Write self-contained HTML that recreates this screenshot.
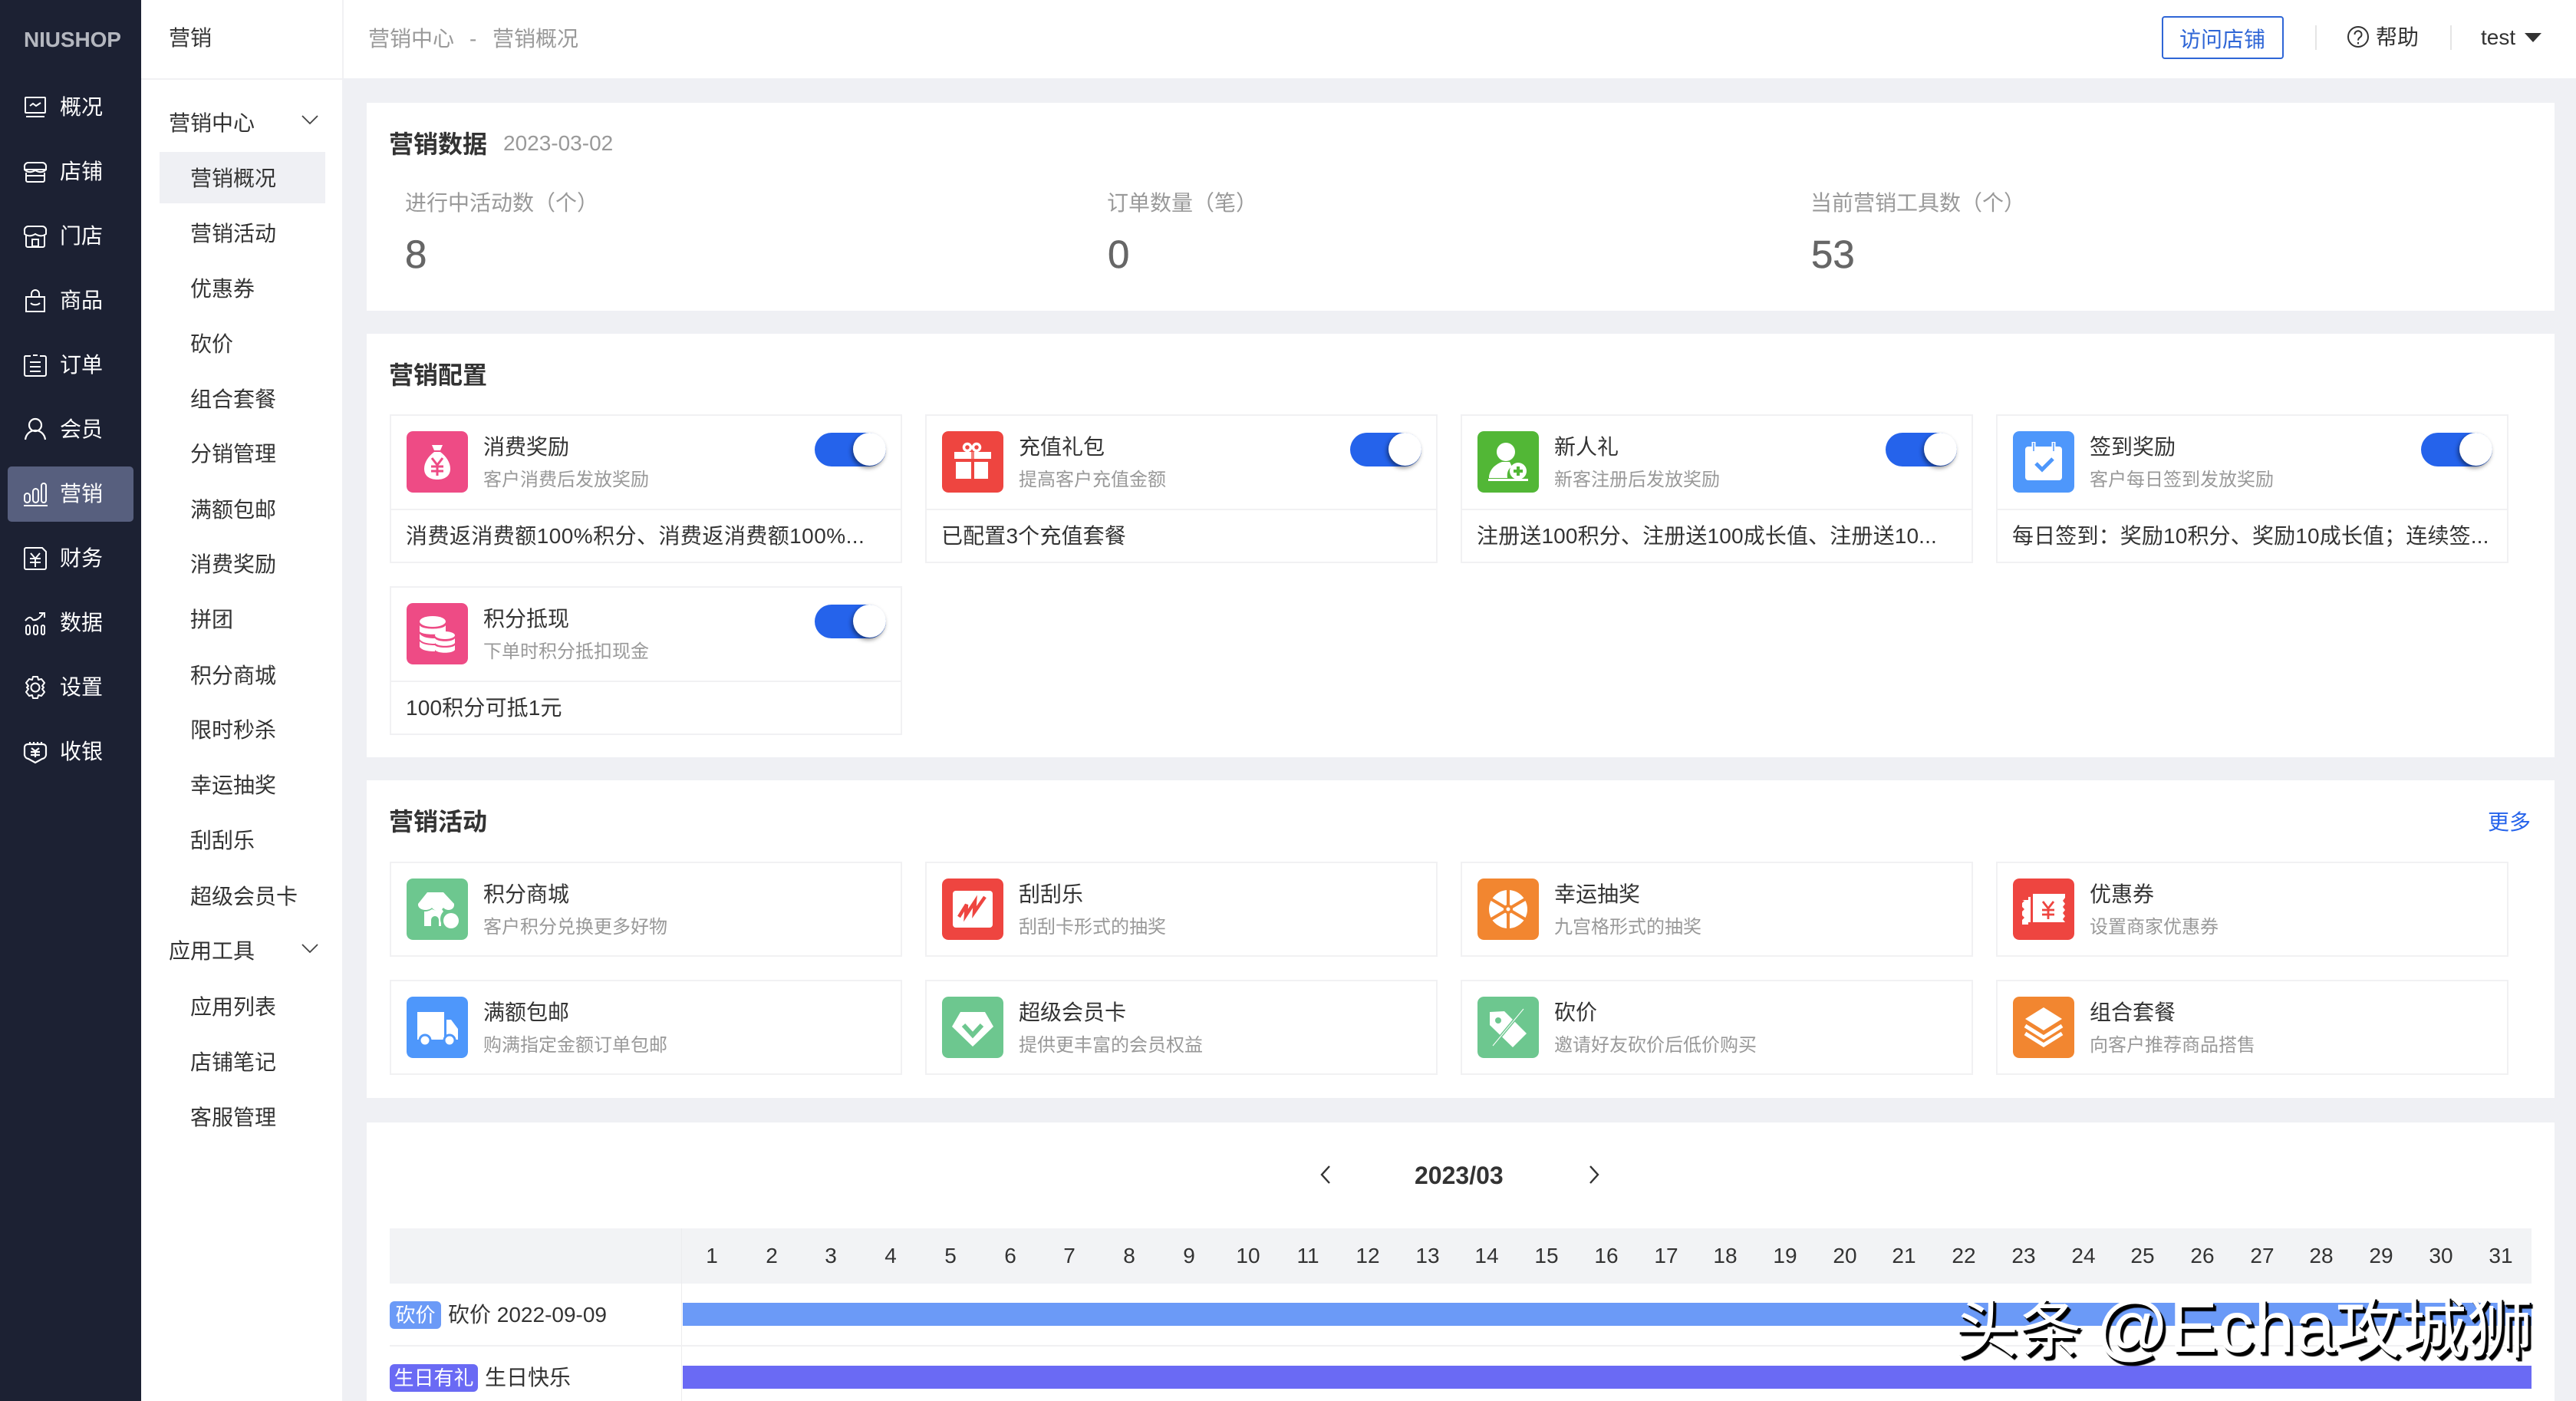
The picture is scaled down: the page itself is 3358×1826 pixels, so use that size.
<!DOCTYPE html>
<html lang="zh">
<head>
<meta charset="utf-8">
<title>营销概况</title>
<style>
html,body{margin:0;padding:0}
body{width:3358px;height:1826px;position:relative;overflow:hidden;background:#eff0f4;font-family:"Liberation Sans","Noto Sans CJK SC",sans-serif;color:#333;font-size:28px}
div,svg{position:absolute;display:block}
.t{white-space:nowrap;line-height:40px;height:40px}
.side{background:#1c2133;left:0;top:0;width:184px;height:1826px}
.m{left:78px;color:#fff;width:60px}
.n{left:248px;margin-top:2px}
.p{left:220px;margin-top:1px}
.card{background:#fff;left:478px;width:2852px}
.h{font-weight:700;font-size:32px;left:507px;color:#333;margin-top:1px}
.box{border:2px solid #f1f1f3;box-sizing:border-box;width:668px;background:#fff}
.ic{width:80px;height:80px;left:20px;top:20px;border-radius:8px}
.a{left:120px;top:21px;color:#333}
.b{left:120px;top:64px;color:#999;font-size:24px}
.f{left:19px;top:137px;color:#333;width:640px;letter-spacing:.15px}
.sep{left:0;right:0;top:121px;height:2px;background:#f1f1f3}
.sw{left:552px;top:22px;width:93px;height:44px;border-radius:22px;background:#2563eb}
.kn{right:0;top:0;width:43px;height:43px;border-radius:50%;background:#fff;box-shadow:-2px 3px 6px rgba(0,0,0,.45)}
.d{top:1617px;width:60px;text-align:center;color:#333;margin-left:1px}
.lb{color:#999;margin-top:2px}
.big{color:#666;font-size:51px;-webkit-text-stroke:.5px #666}
</style>
</head>
<body>
<div class="side"></div>
<div class="t" style="left:31px;top:32px;color:#b4b7bf;font-weight:700;font-size:28px;letter-spacing:-.1px">NIUSHOP</div>
<div style="left:10px;top:608px;width:164px;height:72px;background:#575f7e;border-radius:5px"></div>

<svg style="left:30px;top:124px" width="32" height="32" viewBox="0 0 32 32" fill="none" stroke="#fff" stroke-width="2"><rect x="3" y="3" width="26" height="20" rx="1"/><path d="M9 14l4-3 4 3 6-4M4 28h24"/></svg>
<svg style="left:30px;top:208px" width="32" height="32" viewBox="0 0 32 32" fill="none" stroke="#fff" stroke-width="2"><path d="M7 4h18a5 5 0 0 1 5 6v3H2v-3a5 5 0 0 1 5-6zM2 13c4 4 9 4 14 1 5 3 10 3 14-1M4 17v10a2 2 0 0 0 2 2h20a2 2 0 0 0 2-2V17M4 21h24"/></svg>
<svg style="left:30px;top:292px" width="32" height="32" viewBox="0 0 32 32" fill="none" stroke="#fff" stroke-width="2"><path d="M7 3h18a5 5 0 0 1 5 6v4c-4 3-9 3-14 0-5 3-10 3-14 0V9a5 5 0 0 1 5-6zM4 15v13a2 2 0 0 0 2 2h20a2 2 0 0 0 2-2V15"/><rect x="12" y="20" width="8" height="9"/></svg>
<svg style="left:30px;top:376px" width="32" height="32" viewBox="0 0 32 32" fill="none" stroke="#fff" stroke-width="2"><path d="M4 11h24v19H4zM11 11V7a5 5 0 0 1 5-5 5 5 0 0 1 5 5v4M10 19c3 3 9 3 12 0"/></svg>
<svg style="left:30px;top:460px" width="32" height="32" viewBox="0 0 32 32" fill="none" stroke="#fff" stroke-width="2"><path d="M10 4H3a2 2 0 0 0-1 2v22a2 2 0 0 0 2 2h24a2 2 0 0 0 2-2V6a2 2 0 0 0-2-2h-6M13 3h6M9 12h14M9 18h14M9 24h14"/></svg>
<svg style="left:30px;top:543px" width="32" height="32" viewBox="0 0 32 32" fill="none" stroke="#fff" stroke-width="2.2"><circle cx="16" cy="11" r="8"/><path d="M3 30c1-8 7-12 13-12s12 4 13 12"/></svg>
<svg style="left:30px;top:628px" width="32" height="32" viewBox="0 0 32 32" fill="none" stroke="#fff" stroke-width="2"><rect x="2" y="15" width="7" height="12" rx="3.5"/><rect x="13" y="9" width="7" height="18" rx="3.5"/><rect x="24" y="2" width="6" height="25" rx="3"/><path d="M1 31h31"/></svg>
<svg style="left:30px;top:712px" width="32" height="32" viewBox="0 0 32 32" fill="none" stroke="#fff" stroke-width="2"><path d="M4 2h21l5 5v21a2 2 0 0 1-2 2H4a2 2 0 0 1-2-2V4a2 2 0 0 1 2-2zM10 9l6 7 6-7M9 16h14M9 21h14M16 16v11"/></svg>
<svg style="left:32px;top:796px" width="28" height="32" viewBox="0 0 28 32" fill="none" stroke="#fff" stroke-width="2"><rect x="2" y="19" width="5" height="12" rx="2.5"/><rect x="12" y="19" width="5" height="12" rx="2.5"/><rect x="22" y="19" width="4" height="12" rx="2"/><path d="M1 13c4-5 7-6 10-1 5 1 9-3 13-8M19 3h7v6"/></svg>
<svg style="left:30px;top:880px" width="32" height="32" viewBox="0 0 32 32" fill="none" stroke="#fff" stroke-width="2"><path d="M13 2h6l1 4 4-1 4 5-3 4 2 2-2 2 3 4-4 5-4-1-1 4h-6l-1-4-4 1-4-5 3-4-2-2 2-2-3-4 4-5 4 1z" stroke-linejoin="round"/><circle cx="16" cy="16" r="5.5"/></svg>
<svg style="left:30px;top:964px" width="32" height="32" viewBox="0 0 32 32" fill="none" stroke="#fff" stroke-width="2.2"><path d="M9 5v-2M14 5v-2M19 5v-2M24 5v-2M6 6h20a4 4 0 0 1 4 4v10a6 6 0 0 1-5 5l-9 5-9-5a6 6 0 0 1-5-5V10a4 4 0 0 1 4-4zM11 11l5 4 5-4M10 16h12M10 20h12M16 15v8"/></svg>

<div class="t m" style="top:120px">概况</div>
<div class="t m" style="top:204px">店铺</div>
<div class="t m" style="top:288px">门店</div>
<div class="t m" style="top:372px">商品</div>
<div class="t m" style="top:456px">订单</div>
<div class="t m" style="top:540px">会员</div>
<div class="t m" style="top:624px">营销</div>
<div class="t m" style="top:708px">财务</div>
<div class="t m" style="top:792px">数据</div>
<div class="t m" style="top:876px">设置</div>
<div class="t m" style="top:960px">收银</div>

<!-- second column -->
<div style="left:184px;top:0;width:262px;height:1826px;background:#fff"></div>
<div style="left:184px;top:102px;width:262px;height:2px;background:#f1f1f3"></div>
<div style="left:446px;top:0;width:2px;height:102px;background:#f1f1f3"></div>
<div class="t p" style="top:29px">营销</div>
<div class="t p" style="top:140px">营销中心</div>
<svg style="left:392px;top:149px" width="24" height="16" viewBox="0 0 24 16" fill="none" stroke="#444" stroke-width="1.8"><path d="M2 2l10 10L22 2"/></svg>
<div style="left:208px;top:198px;width:216px;height:67px;background:#eff0f4"></div>
<div class="t n" style="top:211px">营销概况</div>
<div class="t n" style="top:283px">营销活动</div>
<div class="t n" style="top:355px">优惠券</div>
<div class="t n" style="top:427px">砍价</div>
<div class="t n" style="top:499px">组合套餐</div>
<div class="t n" style="top:570px">分销管理</div>
<div class="t n" style="top:643px">满额包邮</div>
<div class="t n" style="top:714px">消费奖励</div>
<div class="t n" style="top:786px">拼团</div>
<div class="t n" style="top:859px">积分商城</div>
<div class="t n" style="top:930px">限时秒杀</div>
<div class="t n" style="top:1002px">幸运抽奖</div>
<div class="t n" style="top:1074px">刮刮乐</div>
<div class="t n" style="top:1147px">超级会员卡</div>
<div class="t p" style="top:1219px">应用工具</div>
<svg style="left:392px;top:1229px" width="24" height="16" viewBox="0 0 24 16" fill="none" stroke="#444" stroke-width="1.8"><path d="M2 2l10 10L22 2"/></svg>
<div class="t n" style="top:1291px">应用列表</div>
<div class="t n" style="top:1363px">店铺笔记</div>
<div class="t n" style="top:1435px">客服管理</div>

<!-- top bar -->
<div style="left:448px;top:0;width:2910px;height:102px;background:#fff"></div>
<div class="t lb" style="left:480px;top:29px">营销中心</div>
<div class="t lb" style="left:612px;top:29px">-</div>
<div class="t lb" style="left:642px;top:29px">营销概况</div>
<div style="left:2818px;top:21px;width:159px;height:56px;border:2px solid #2f66d6;border-radius:4px;box-sizing:border-box"></div>
<div class="t" style="left:2841px;top:32px;color:#2f66d6">访问店铺</div>
<div style="left:3018px;top:33px;width:2px;height:32px;background:#e5e5e5"></div>
<svg style="left:3059px;top:33px" width="30" height="30" viewBox="0 0 30 30" fill="none" stroke="#333" stroke-width="2"><circle cx="15" cy="15" r="13"/><path d="M10.5 12a4.5 4.5 0 1 1 7 3.6c-1.6 1.1-2.5 2-2.5 4"/><path d="M15 22v2.4"/></svg>
<div class="t" style="left:3097px;top:29px">帮助</div>
<div style="left:3194px;top:33px;width:2px;height:32px;background:#e5e5e5"></div>
<div class="t" style="left:3234px;top:29px">test</div>
<svg style="left:3291px;top:43px" width="22" height="12" viewBox="0 0 22 12"><path d="M0 0h22L11 12z" fill="#333"/></svg>

<!-- card 1 -->
<div class="card" style="top:134px;height:271px"></div>
<div class="t h" style="top:167px">营销数据</div>
<div class="t" style="left:656px;top:167px;color:#999;font-size:28px">2023-03-02</div>
<div class="t lb" style="left:528px;top:243px">进行中活动数（个）</div>
<div class="t lb" style="left:1443px;top:243px">订单数量（笔）</div>
<div class="t lb" style="left:2360px;top:243px">当前营销工具数（个）</div>
<div class="t big" style="left:528px;top:312px">8</div>
<div class="t big" style="left:1444px;top:312px">0</div>
<div class="t big" style="left:2361px;top:312px">53</div>

<!-- card 2 -->
<div class="card" style="top:435px;height:552px"></div>
<div class="t h" style="top:468px">营销配置</div>

<div class="box" style="left:508px;top:540px;height:194px">
<svg class="ic" viewBox="0 0 80 80"><rect width="80" height="80" rx="8" fill="#ee4b85"/><path d="M33 18h14l-3 7h-8zM36 27h8c8 6 13 14 13 22 0 10-8 14-17 14s-17-4-17-14c0-8 5-16 13-22z" fill="#fff"/><path d="M33 35l7 9 7-9M32 46h16M32 52h16M40 44v14" stroke="#ee4b85" stroke-width="3" fill="none"/></svg>
<div class="t a">消费奖励</div><div class="t b">客户消费后发放奖励</div>
<div class="sw"><div class="kn"></div></div>
<div class="sep"></div><div class="t f" style="letter-spacing:.45px">消费返消费额100%积分、消费返消费额100%...</div></div>

<div class="box" style="left:1206px;top:540px;height:194px">
<svg class="ic" viewBox="0 0 80 80"><rect width="80" height="80" rx="8" fill="#ee4540"/><path d="M16 27h22v9H16zM42 27h22v9H42zM18 40h20v22H18zM42 40h18v22H42z" fill="#fff"/><path d="M38 27h4v9h-4z" fill="#fff" opacity=".3"/><g fill="none" stroke="#fff" stroke-width="3.5"><circle cx="33" cy="21" r="4.5"/><circle cx="45" cy="21" r="4.5"/></g></svg>
<div class="t a">充值礼包</div><div class="t b">提高客户充值金额</div>
<div class="sw"><div class="kn"></div></div>
<div class="sep"></div><div class="t f">已配置3个充值套餐</div></div>

<div class="box" style="left:1904px;top:540px;height:194px">
<svg class="ic" viewBox="0 0 80 80"><rect width="80" height="80" rx="8" fill="#52b736"/><circle cx="37" cy="27" r="12" fill="#fff"/><path d="M32 40h10l3 6c-5 3-7 8-6 15h-24c0-9 6-17 17-21z" fill="#fff"/><circle cx="53" cy="52" r="11" fill="#fff"/><path d="M53 46v12M47 52h12" stroke="#52b736" stroke-width="4"/><path d="M14 62h52v3H14z" fill="#fff"/></svg>
<div class="t a">新人礼</div><div class="t b">新客注册后发放奖励</div>
<div class="sw"><div class="kn"></div></div>
<div class="sep"></div><div class="t f">注册送100积分、注册送100成长值、注册送10...</div></div>

<div class="box" style="left:2602px;top:540px;height:194px">
<svg class="ic" viewBox="0 0 80 80"><rect width="80" height="80" rx="8" fill="#4e97fb"/><rect x="16" y="20" width="48" height="44" rx="4" fill="#fff"/><path d="M27 14v12M53 14v12" stroke="#fff" stroke-width="5"/><path d="M27 15v11M53 15v11" stroke="#4e97fb" stroke-width="1.5"/><path d="M30 42l8 8 14-14" stroke="#4e97fb" stroke-width="5" fill="none"/></svg>
<div class="t a">签到奖励</div><div class="t b">客户每日签到发放奖励</div>
<div class="sw"><div class="kn"></div></div>
<div class="sep"></div><div class="t f">每日签到：奖励10积分、奖励10成长值；连续签...</div></div>

<div class="box" style="left:508px;top:764px;height:194px">
<svg class="ic" viewBox="0 0 80 80"><rect width="80" height="80" rx="8" fill="#ee4b85"/><g fill="#fff"><ellipse cx="34" cy="24" rx="17" ry="7"/><path d="M17 29c3 6 31 6 34 0v8c-3 5-31 5-34 0zM17 40c4 5 12 6 20 6v7c-8 0-17-1-20-6zM17 50c4 4 12 5 20 5v8c-8 0-17-1-20-6z"/><ellipse cx="50" cy="42" rx="13" ry="5"/><path d="M37 46c3 5 23 5 26 0v6c-3 5-23 5-26 0zM37 55c3 4 23 4 26 0v6c-3 5-23 5-26 0z"/></g></svg>
<div class="t a">积分抵现</div><div class="t b">下单时积分抵扣现金</div>
<div class="sw"><div class="kn"></div></div>
<div class="sep"></div><div class="t f">100积分可抵1元</div></div>

<!-- card 3 -->
<div class="card" style="top:1017px;height:414px"></div>
<div class="t h" style="top:1050px">营销活动</div>
<div class="t" style="left:3243px;top:1052px;color:#2563eb">更多</div>

<div class="box" style="left:508px;top:1123px;height:124px"><svg class="ic" viewBox="0 0 80 80"><rect width="80" height="80" rx="8" fill="#6dc78f"/><path d="M27 18h21l14 15c1 9-10 10-14 5-3 5-12 5-15 0-4 5-19 4-18-5z" fill="#fff"/><path d="M23 43c4 0 7-1 10-3 4 2 9 2 13 0l2 3c-4 4-5 10-3 15v4h-3V54a5 5 0 0 0-10 0v8h-9z" fill="#fff"/><circle cx="58" cy="55" r="10" fill="#fff"/></svg><div class="t a">积分商城</div><div class="t b">客户积分兑换更多好物</div></div>
<div class="box" style="left:1206px;top:1123px;height:124px"><svg class="ic" viewBox="0 0 80 80"><rect width="80" height="80" rx="8" fill="#ee4540"/><rect x="14" y="16" width="52" height="48" rx="4" fill="#fff"/><path d="M22 50l10-16-1 14 12-18-1 14 14-20" stroke="#ee4540" stroke-width="4.5" fill="none"/></svg><div class="t a">刮刮乐</div><div class="t b">刮刮卡形式的抽奖</div></div>
<div class="box" style="left:1904px;top:1123px;height:124px"><svg class="ic" viewBox="0 0 80 80"><rect width="80" height="80" rx="8" fill="#f28630"/><circle cx="40" cy="40" r="25" fill="#fff"/><g stroke="#f28630" stroke-width="4"><path d="M40 15v50M18 27l44 26M18 53l44-26"/></g><circle cx="40" cy="40" r="6" fill="#f28630"/><circle cx="40" cy="40" r="2.5" fill="#fff"/></svg><div class="t a">幸运抽奖</div><div class="t b">九宫格形式的抽奖</div></div>
<div class="box" style="left:2602px;top:1123px;height:124px"><svg class="ic" viewBox="0 0 80 80"><rect width="80" height="80" rx="8" fill="#ee4540"/><path d="M12 28h8v-4h3v33h-3v3h-8v-6l3-3-3-3v-5l3-3-3-3v-5l3-3zM26 20h42v5l-3 4 3 4-3 4 3 4-3 4 3 4-3 4 3 4h-42z" fill="#fff"/><path d="M39 30l7 9 7-9M38 41h16M38 47h16M46 39v14" stroke="#ee4540" stroke-width="2.8" fill="none"/></svg><div class="t a">优惠券</div><div class="t b">设置商家优惠券</div></div>

<div class="box" style="left:508px;top:1277px;height:124px"><svg class="ic" viewBox="0 0 80 80"><rect width="80" height="80" rx="8" fill="#4e97fb"/><path d="M14 20h35v36H14zM52 30h6l9 12v14H52z" fill="#fff"/><circle cx="24" cy="57" r="7" fill="#fff" stroke="#4e97fb" stroke-width="3"/><circle cx="56" cy="57" r="7" fill="#fff" stroke="#4e97fb" stroke-width="3"/></svg><div class="t a">满额包邮</div><div class="t b">购满指定金额订单包邮</div></div>
<div class="box" style="left:1206px;top:1277px;height:124px"><svg class="ic" viewBox="0 0 80 80"><rect width="80" height="80" rx="8" fill="#6dc78f"/><path d="M24 20h32l11 19-27 26-27-26z" fill="#fff"/><path d="M28 37l12 13 12-13" stroke="#6dc78f" stroke-width="6" fill="none"/></svg><div class="t a">超级会员卡</div><div class="t b">提供更丰富的会员权益</div></div>
<div class="box" style="left:1904px;top:1277px;height:124px"><svg class="ic" viewBox="0 0 80 80"><rect width="80" height="80" rx="8" fill="#6dc78f"/><path d="M16 20l19-1 29 29-18 18-30-29z" fill="#fff"/><circle cx="27" cy="31" r="4" fill="#6dc78f"/><path d="M20 64l40-48" stroke="#6dc78f" stroke-width="4"/><path d="M20 64l40-48" stroke="#fff" stroke-width="1"/></svg><div class="t a">砍价</div><div class="t b">邀请好友砍价后低价购买</div></div>
<div class="box" style="left:2602px;top:1277px;height:124px"><svg class="ic" viewBox="0 0 80 80"><rect width="80" height="80" rx="8" fill="#f28630"/><path d="M40 14l24 15-24 15-24-15z" fill="#fff"/><path d="M16 38l24 15 24-15M16 48l24 15 24-15" stroke="#fff" stroke-width="5" fill="none"/></svg><div class="t a">组合套餐</div><div class="t b">向客户推荐商品搭售</div></div>

<!-- calendar -->
<div class="card" style="top:1463px;height:363px"></div>
<svg style="left:1718px;top:1517px" width="20" height="28" viewBox="0 0 20 28" fill="none" stroke="#333" stroke-width="2.4"><path d="M15 3L5 14l10 11"/></svg>
<div class="t" style="left:1844px;top:1512px;font-weight:700;font-size:32px">2023/03</div>
<svg style="left:2068px;top:1517px" width="20" height="28" viewBox="0 0 20 28" fill="none" stroke="#333" stroke-width="2.4"><path d="M5 3l10 11L5 25"/></svg>
<div style="left:508px;top:1601px;width:2792px;height:72px;background:#f2f3f5"></div>
<div style="left:888px;top:1601px;width:1px;height:225px;background:#ececee"></div>
<div class="t d" style="left:897px">1</div><div class="t d" style="left:975px">2</div><div class="t d" style="left:1052px">3</div><div class="t d" style="left:1130px">4</div><div class="t d" style="left:1208px">5</div><div class="t d" style="left:1286px">6</div><div class="t d" style="left:1363px">7</div><div class="t d" style="left:1441px">8</div><div class="t d" style="left:1519px">9</div><div class="t d" style="left:1596px">10</div><div class="t d" style="left:1674px">11</div><div class="t d" style="left:1752px">12</div><div class="t d" style="left:1830px">13</div><div class="t d" style="left:1907px">14</div><div class="t d" style="left:1985px">15</div><div class="t d" style="left:2063px">16</div><div class="t d" style="left:2141px">17</div><div class="t d" style="left:2218px">18</div><div class="t d" style="left:2296px">19</div><div class="t d" style="left:2374px">20</div><div class="t d" style="left:2451px">21</div><div class="t d" style="left:2529px">22</div><div class="t d" style="left:2607px">23</div><div class="t d" style="left:2685px">24</div><div class="t d" style="left:2762px">25</div><div class="t d" style="left:2840px">26</div><div class="t d" style="left:2918px">27</div><div class="t d" style="left:2995px">28</div><div class="t d" style="left:3073px">29</div><div class="t d" style="left:3151px">30</div><div class="t d" style="left:3229px">31</div>

<div style="left:890px;top:1698px;width:2410px;height:30px;background:#6b9af7"></div>
<div style="left:508px;top:1753px;width:2792px;height:2px;background:#f0f0f2"></div>
<div style="left:890px;top:1780px;width:2410px;height:30px;background:#6a6af4"></div>
<div class="t" style="left:508px;top:1696px;width:67px;height:36px;line-height:36px;background:#6b9af7;border-radius:6px;color:#fff;font-size:26px;text-align:center">砍价</div>
<div class="t" style="left:584px;top:1694px">砍价 2022-09-09</div>
<div class="t" style="left:508px;top:1778px;width:115px;height:36px;line-height:36px;background:#6a6af4;border-radius:6px;color:#fff;font-size:26px;text-align:center">生日有礼</div>
<div class="t" style="left:632px;top:1776px">生日快乐</div>

<div class="t" style="left:2548px;top:1680px;height:100px;line-height:100px;font-size:83px;color:#fff;text-shadow:2px 3px 0 #000,4px 5px 1px #000">头条 <span style="font-size:95px;margin-left:-6px">@Echa</span><span style="font-size:86px">攻城狮</span></div>
</body>
</html>
